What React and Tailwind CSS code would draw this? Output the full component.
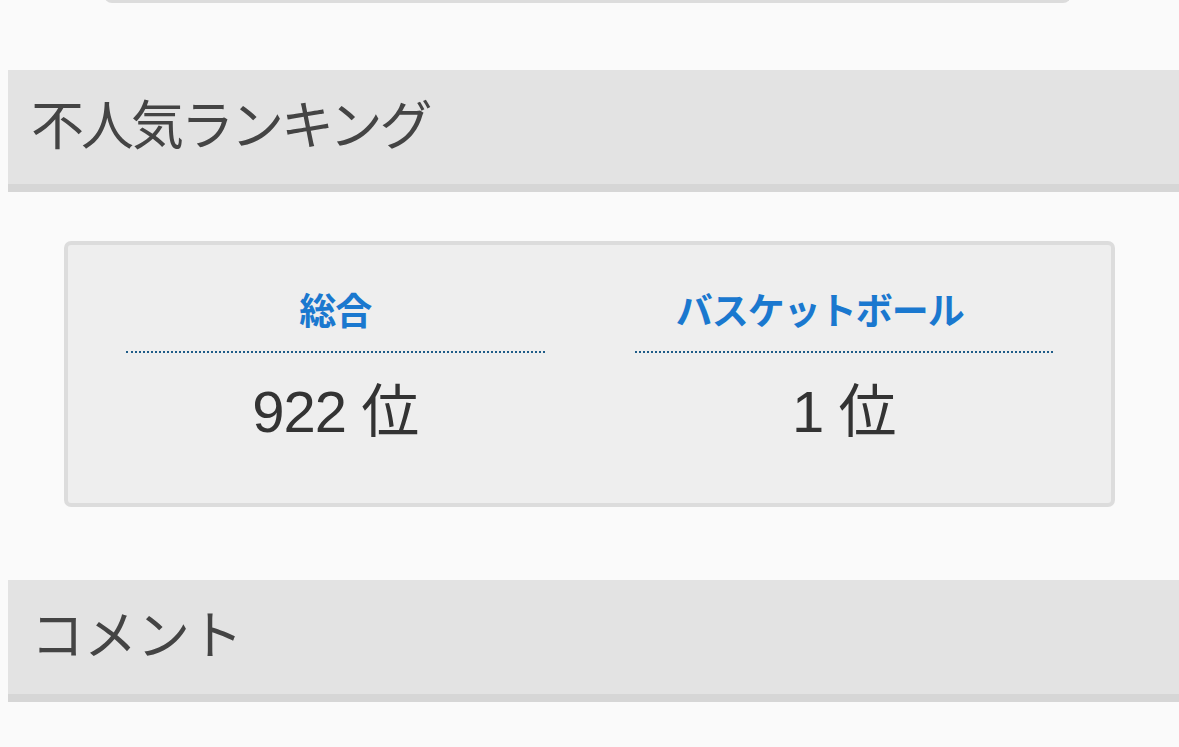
const rankings = [
  { label: "総合", value: "922", unit: "位", shift: "" },
  { label: "バスケットボール", value: "1", unit: "位", shift: "pr-[48px] tracking-[-2px]" },
];

const SectionHeader = ({ children, tight }) => (
  <div className="ml-2 bg-[#e3e3e3] border-b-[8px] border-[#d6d6d6]">
    <h2
      className={`h-[114px] flex items-center pl-[23px] text-[53px] font-normal text-[#444] ${
        tight ? "tracking-[-3px]" : "tracking-[0px]"
      }`}
    >
      {children}
    </h2>
  </div>
);

const RankingCard = () => (
  <div className="mx-16 mt-[49px] rounded-[7px] border-4 border-[#dcdcdc] bg-[#eeeeee] px-[58px] pt-[41px] pb-[56px]">
    <div className="grid grid-cols-2 gap-[90px]">
      {rankings.map((r) => (
        <div key={r.label} className="flex flex-col items-center">
          <div
            className={`w-full text-center border-b-2 border-dotted border-[#1f5c88] pb-[11px] ${r.shift}`}
          >
            <span className="text-[37px] leading-[54px] font-bold text-[#1a78cf] tracking-[-1px]">
              {r.label}
            </span>
          </div>
          <div className="mt-[24px] text-[58px] leading-[70px] text-[#333] tracking-[-1px]">
            {r.value} {r.unit}
          </div>
        </div>
      ))}
    </div>
  </div>
);

export default function App() {
  return (
    <div
      className="min-h-[747px] w-[1179px] overflow-hidden bg-[#fafafa]"
      style={{ fontFamily: '"Liberation Sans", "Noto Sans CJK JP", sans-serif' }}
    >
      {/* bottom edge of the card above */}
      <div className="ml-[104px] mr-[108px] -mt-[20px] h-[23px] rounded-b-[8px] border-x-[3px] border-b-[3px] border-[#dcdcdc] bg-[#f4f4f4]" />

      <div className="mt-[67px]">
        <SectionHeader tight>不人気ランキング</SectionHeader>
      </div>

      <RankingCard />

      <div className="mt-[73px]">
        <SectionHeader>コメント</SectionHeader>
      </div>
    </div>
  );
}
